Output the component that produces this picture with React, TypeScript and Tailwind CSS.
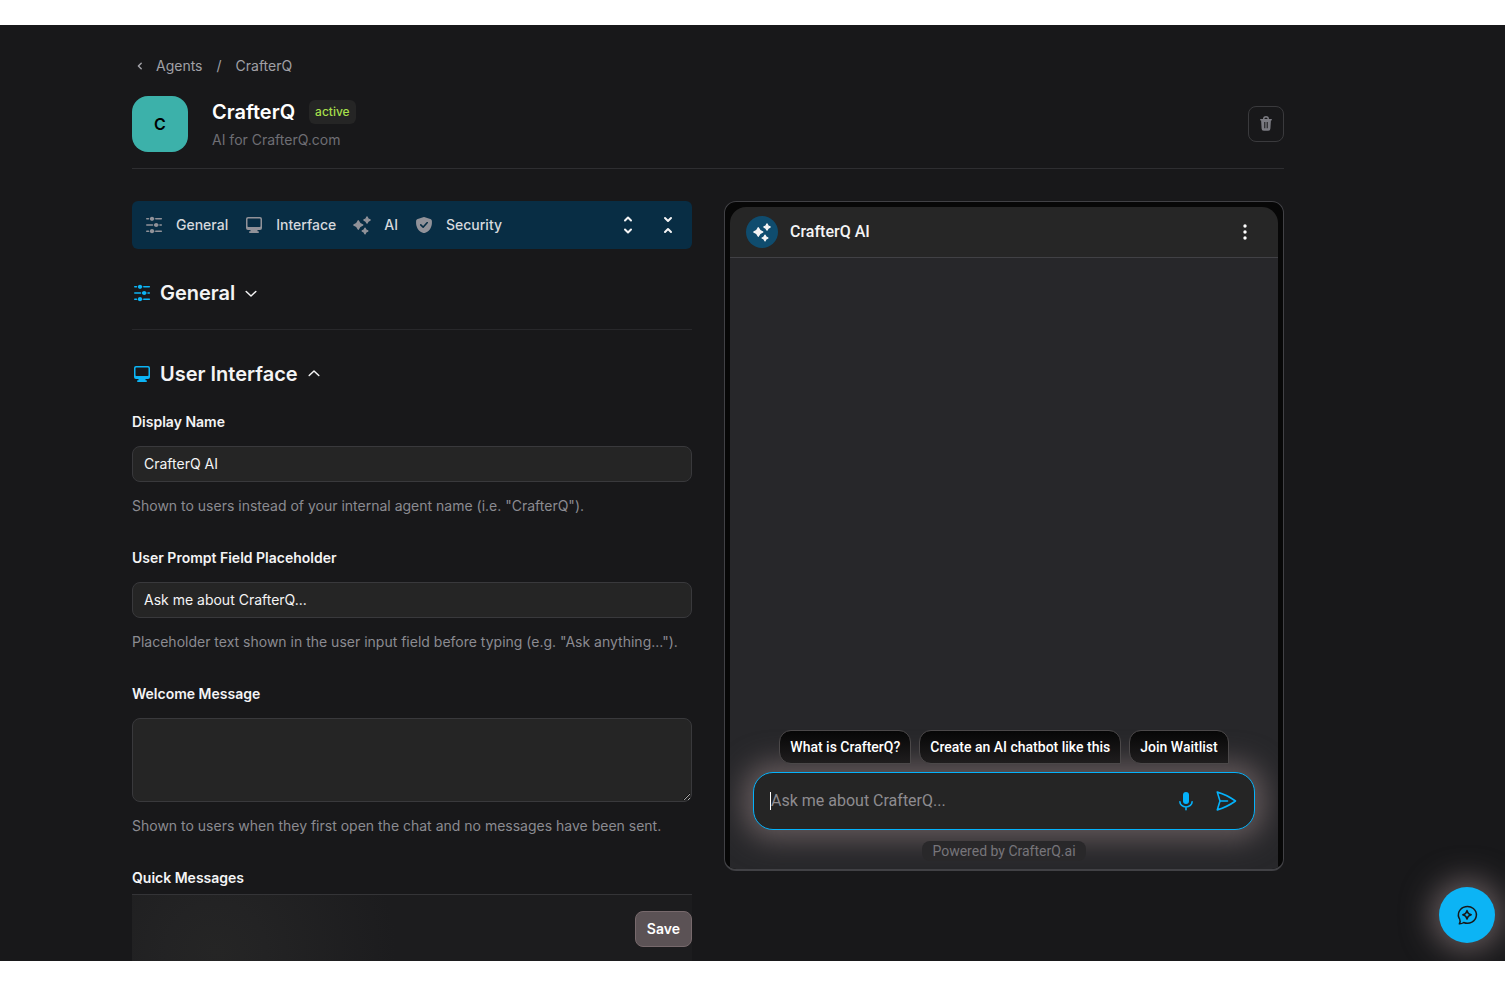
import { useState } from 'react';
import type { ReactNode } from 'react';

type IconProps = { className?: string };

function SlidersIcon({ className }: IconProps) {
    return (
        <svg viewBox="0 0 20 20" className={className} fill="currentColor" stroke="currentColor" aria-hidden="true">
            <path
                d="M2.800 3.800H4.500M11.800 3.800H17.300M2.800 10H8.500M16 10H17.300M2.800 16.200H4.500M11.800 16.200H17.300"
                fill="none"
                strokeWidth="1.600"
                strokeLinecap="round"
            />
            <path d="M6 3.800H10.200M10 10H14.400M6 16.200H10.200" fill="none" strokeWidth="1.600" />
            <circle cx="8" cy="3.800" r="2.100" stroke="none" />
            <circle cx="12.200" cy="10" r="2.100" stroke="none" />
            <circle cx="8" cy="16.200" r="2.100" stroke="none" />
        </svg>
    );
}

function MonitorIcon({ className }: IconProps) {
    return (
        <svg viewBox="0 0 20 20" className={className} fill="currentColor" aria-hidden="true">
            <path
                fillRule="evenodd"
                d="M4 2h12a2 2 0 0 1 2 2v9a2 2 0 0 1-2 2h-2.500v1.200h.6a.9.9 0 0 1 0 1.800H5.900a.9.9 0 0 1 0-1.800h.6V15H4a2 2 0 0 1-2-2V4a2 2 0 0 1 2-2Zm.3 1.500a.8.8 0 0 0-.8.8v6.900a.8.8 0 0 0 .8.8h11.400a.8.8 0 0 0 .8-.8V4.300a.8.8 0 0 0-.8-.8H4.300Z"
            />
        </svg>
    );
}

function SparklesIcon({ className }: IconProps) {
    return (
        <svg viewBox="0 0 20 20" className={className} fill="currentColor" stroke="currentColor" strokeWidth="1" strokeLinejoin="round" aria-hidden="true">
            <path d="M6.300 5.900Q7.300 9 10.600 10 7.300 11 6.300 14.100 5.300 11 2 10 5.300 9 6.300 5.900Z" strokeWidth="1.600" />
            <path d="M15 1.900Q15.600 4.400 18.100 5 15.600 5.600 15 8.100 14.400 5.600 11.900 5 14.400 4.400 15 1.900Z" strokeWidth="1.400" />
            <path d="M13 13.200Q13.500 15.500 15.800 16 13.500 16.500 13 18.800 12.500 16.500 10.200 16 12.500 15.500 13 13.200Z" strokeWidth="1.400" />
        </svg>
    );
}

function ShieldIcon({ className }: IconProps) {
    return (
        <svg viewBox="0 0 20 20" className={className} fill="currentColor" aria-hidden="true">
            <path
                fillRule="evenodd"
                d="M9.100 2.200a2.600 2.600 0 0 1 1.800 0l5.400 1.900c.9.3 1.500 1 1.600 1.900.4 5.500-1.700 9.800-6.600 11.800a3.400 3.400 0 0 1-2.600 0C3.800 15.800 1.700 11.500 2.100 6c.1-.9.7-1.600 1.600-1.900l5.400-1.900Zm4.800 5.900a.75.75 0 0 0-1.100-1L9.100 11 7.300 9.300a.75.75 0 0 0-1.100 1.100l2.400 2.300c.3.3.8.3 1.100 0l4.200-4.600Z"
            />
        </svg>
    );
}

function TrashIcon({ className }: IconProps) {
    return (
        <svg viewBox="0 0 16 16" className={className} fill="currentColor" aria-hidden="true">
            <path
                fillRule="evenodd"
                d="M5 3a3 3 0 0 1 6 0h2.200a.7.7 0 0 1 0 1.600h-.3l-.5 7.900A2.200 2.200 0 0 1 10.200 14.800H5.800a2.200 2.200 0 0 1-2.200-2.300L3.100 4.600h-.3A.7.7 0 0 1 2.800 3H5Zm1.400 0h3.200a1.600 1.600 0 0 0-3.200 0ZM6.300 6v6.300h1V6h-1Zm2.400 0v6.300h1V6h-1Z"
            />
        </svg>
    );
}

function MicIcon({ className }: IconProps) {
    return (
        <svg viewBox="0 0 24 24" className={className} fill="none" stroke="currentColor" strokeWidth="1.600" strokeLinecap="round" aria-hidden="true">
            <rect x="9" y="3" width="6" height="12" rx="3" fill="currentColor" stroke="none" />
            <path d="M5.900 12.800a6.100 5.200 0 0 0 12.200 0M12 18V20.800" />
        </svg>
    );
}

function SendIcon({ className }: IconProps) {
    return (
        <svg viewBox="0 0 24 24" className={className} fill="none" stroke="currentColor" strokeWidth="1.600" strokeLinecap="round" strokeLinejoin="round" aria-hidden="true">
            <path d="M6 12 3.270 3.130A59.770 59.770 0 0 1 21.490 12 59.770 59.770 0 0 1 3.270 20.880L6 12Zm0 0h7.500" />
        </svg>
    );
}

function ChatSparkIcon({ className }: IconProps) {
    return (
        <svg viewBox="0 0 24 24" className={className} fill="none" stroke="currentColor" strokeWidth="1.500" strokeLinecap="round" strokeLinejoin="round" aria-hidden="true">
            <path d="M4.300 20.800C6.200 20.900 7.600 20.300 8.700 19.500A9 8.400 0 1 0 4.700 16.200C5.400 17.700 5.300 19.300 4.300 20.800Z" />
            <path d="M12 7.600Q12.700 11 16.200 11.800 12.700 12.600 12 16 11.300 12.600 7.800 11.800 11.300 11 12 7.600Z" />
        </svg>
    );
}

function Chevron({ d, className }: { d: string; className?: string }) {
    return (
        <svg viewBox="0 0 20 20" className={className} fill="none" stroke="currentColor" strokeWidth="1.500" strokeLinecap="round" strokeLinejoin="round" aria-hidden="true">
            <path d={d} />
        </svg>
    );
}

const tabs = [
    { name: 'General', icon: SlidersIcon },
    { name: 'Interface', icon: MonitorIcon },
    { name: 'AI', icon: SparklesIcon },
    { name: 'Security', icon: ShieldIcon },
];

const quickMessages = ['What is CrafterQ?', 'Create an AI chatbot like this', 'Join Waitlist'];

function Field({ id, label, help, children }: { id: string; label: string; help: string; children: ReactNode }) {
    return (
        <div className="mb-8 flex flex-col">
            <label htmlFor={id} className="mb-3.5 text-sm font-semibold text-zinc-100">
                {label}
            </label>
            {children}
            <p className="mt-3.5 text-sm text-[#8b8b91]">{help}</p>
        </div>
    );
}

function ChatPreview({ title, placeholder }: { title: string; placeholder: string }) {
    return (
        <section className="flex min-h-[670px] flex-col self-start overflow-hidden rounded-xl border border-b-2 border-[#414145] bg-[#070707] px-[5px] pt-[5px] font-['Roboto',sans-serif]">
            <header className="flex h-[51px] shrink-0 items-center rounded-t-2xl border-b border-[#414145] bg-[#262626] px-4">
                <span className="flex size-8 items-center justify-center rounded-full bg-[#0f4c6e] text-zinc-100">
                    <SparklesIcon className="size-5" />
                </span>
                <h2 className="ml-3 flex-1 font-medium text-zinc-100">{title}</h2>
                <button type="button" aria-label="More options" className="flex w-8 justify-center text-white">
                    <svg viewBox="0 0 20 20" className="size-5" fill="currentColor" aria-hidden="true">
                        <circle cx="9" cy="4" r="1.700" />
                        <circle cx="9" cy="10" r="1.700" />
                        <circle cx="9" cy="16" r="1.700" />
                    </svg>
                </button>
            </header>
            <div className="flex flex-1 flex-col justify-end overflow-hidden bg-[#27272a] px-[23px] pb-2">
                <div className="relative z-10 flex justify-center gap-2">
                    {quickMessages.map((message) => (
                        <button
                            key={message}
                            type="button"
                            className="h-[34px] rounded-xl rounded-br-none border border-[#4b4849] bg-linear-to-b from-[#070707] to-[#1f1d1e] px-2.5 text-sm font-medium whitespace-nowrap text-white"
                        >
                            {message}
                        </button>
                    ))}
                </div>
                <div className="mt-2 flex h-[58px] items-center rounded-[20px] border border-[#04b2fb] bg-[#252525] px-4 shadow-[0_0_28px_10px_#62585a]">
                    <span className="h-[18px] w-px bg-white" />
                    <input
                        aria-label="Your message"
                        placeholder={placeholder}
                        className="min-w-0 flex-1 bg-transparent text-zinc-100 outline-none placeholder:text-[#8e8c90]"
                    />
                    <button type="button" aria-label="Record" className="flex size-10 items-center justify-center text-[#04b2fb]">
                        <MicIcon className="size-6" />
                    </button>
                    <button type="button" aria-label="Send" className="-mr-2 flex size-10 items-center justify-center text-[#04b2fb]">
                        <SendIcon className="size-6" />
                    </button>
                </div>
                <a href="#powered" className="relative mt-[11px] self-center rounded-lg bg-[#29282a] px-2.5 text-sm text-[#77757a]">
                    Powered by CrafterQ.ai
                </a>
            </div>
        </section>
    );
}

export default function App() {
    const [displayName, setDisplayName] = useState('CrafterQ AI');
    const [placeholder, setPlaceholder] = useState('Ask me about CrafterQ...');
    const [welcome, setWelcome] = useState('');

    const inputStyle =
        'rounded-lg border border-[#39393c] bg-[#252525] px-[11px] text-sm text-zinc-100 outline-none focus:border-sky-500';

    return (
        <div className="flex h-screen flex-col bg-white pt-[25px] pb-[26px] font-['Inter',sans-serif] text-base">
            <main className="relative min-h-0 flex-1 overflow-hidden bg-[#18181a] pt-[31px] pr-[221px] pl-[132px]">
                <nav aria-label="Breadcrumb" className="flex items-center text-sm text-[#a0a0a6]">
                    <Chevron d="M9.200 7.200 6.400 10 9.200 12.800" className="mr-1 size-5" />
                    <a href="#agents">Agents</a>
                    <span className="mx-3.5">/</span>
                    <a href="#crafterq">CrafterQ</a>
                </nav>

                <header className="mt-5 flex items-center border-b border-[#2e2e31] pb-4">
                    <span className="flex size-14 items-center justify-center rounded-2xl bg-[#3cb1aa] font-semibold text-black">C</span>
                    <div className="ml-6 flex-1">
                        <div className="flex items-center">
                            <h1 className="text-xl font-semibold text-white">CrafterQ</h1>
                            <span className="ml-3.5 flex h-6 items-center rounded-md bg-[#252525] px-1.5 text-xs font-medium text-[#a6df4b]">
                                active
                            </span>
                        </div>
                        <p className="mt-1 text-sm text-[#6e6e74]">AI for CrafterQ.com</p>
                    </div>
                    <button
                        type="button"
                        aria-label="Delete agent"
                        className="flex size-9 items-center justify-center rounded-lg border border-[#3a3a3d] text-[#7b7b82]"
                    >
                        <TrashIcon className="size-4" />
                    </button>
                </header>

                <div className="mt-8 grid grid-cols-2 gap-8">
                    <div className="flex flex-col">
                        <nav aria-label="Sections" className="flex h-12 items-center gap-4 rounded-md bg-[#082d44] pr-1 pl-3">
                            {tabs.map(({ name, icon: Icon }) => (
                                <a key={name} href={`#${name}`} className="flex items-center gap-3 text-sm font-medium text-[#d6d9dd]">
                                    <Icon className="size-5 text-[#919299]" />
                                    {name}
                                </a>
                            ))}
                            <div className="ml-auto flex text-zinc-100">
                                <button type="button" aria-label="Expand all" className="flex size-10 items-center justify-center">
                                    <Chevron d="M7 5.500 10 2.500 13 5.500M7 14.500 10 17.500 13 14.500" className="size-5 stroke-2" />
                                </button>
                                <button type="button" aria-label="Collapse all" className="flex size-10 items-center justify-center">
                                    <Chevron d="M7 3 10 6 13 3M7 17 10 14 13 17" className="size-5 stroke-2" />
                                </button>
                            </div>
                        </nav>

                        <h2 className="mt-[30px] border-b border-[#28282b] pb-[22px] text-xl font-semibold text-zinc-100">
                            <button type="button" aria-expanded="false" className="flex items-center">
                                <SlidersIcon className="mr-2 size-5 text-[#0cb4f5]" />
                                General
                                <Chevron d="M5.200 8.500 10 13 14.800 8.500" className="ml-1.5 size-5" />
                            </button>
                        </h2>

                        <h2 className="mt-[30px] mb-6 text-xl font-semibold text-zinc-100">
                            <button type="button" aria-expanded="true" className="flex items-center">
                                <MonitorIcon className="mr-2 size-5 text-[#0cb4f5]" />
                                User Interface
                                <Chevron d="M5.200 11.500 10 7 14.800 11.500" className="ml-1.5 size-5" />
                            </button>
                        </h2>

                        <Field id="display-name" label="Display Name" help={'Shown to users instead of your internal agent name (i.e. "CrafterQ").'}>
                            <input
                                id="display-name"
                                value={displayName}
                                onChange={(e) => setDisplayName(e.target.value)}
                                className={`h-9 pb-0.5 ${inputStyle}`}
                            />
                        </Field>
                        <Field
                            id="placeholder"
                            label="User Prompt Field Placeholder"
                            help={'Placeholder text shown in the user input field before typing (e.g. "Ask anything...").'}
                        >
                            <input
                                id="placeholder"
                                value={placeholder}
                                onChange={(e) => setPlaceholder(e.target.value)}
                                className={`h-9 pb-0.5 ${inputStyle}`}
                            />
                        </Field>
                        <Field id="welcome" label="Welcome Message" help="Shown to users when they first open the chat and no messages have been sent.">
                            <textarea
                                id="welcome"
                                value={welcome}
                                onChange={(e) => setWelcome(e.target.value)}
                                className={`h-[84px] resize-y py-2 ${inputStyle}`}
                            />
                        </Field>

                        <h3 className="text-sm font-semibold text-zinc-100">Quick Messages</h3>
                        <div className="mt-1.5 flex justify-end border-t border-[#343437] bg-[#1c1c1e] bg-[radial-gradient(circle_at_15%_85%,#252525_0,#232324_50px,#1c1c1e_180px)] py-4">
                            <button type="submit" className="h-9 rounded-lg border border-[#77696c] bg-[#5b5255] px-[11px] text-sm font-semibold text-white">
                                Save
                            </button>
                        </div>
                    </div>

                    <ChatPreview title={displayName} placeholder={placeholder} />
                </div>

                <button
                    type="button"
                    aria-label="Open chat"
                    className="absolute right-2.5 bottom-[18px] flex size-14 items-center justify-center rounded-full bg-[#0cb4f5] text-[#18181a] shadow-[0_0_30px_8px_#62585a]"
                >
                    <ChatSparkIcon className="size-6" />
                </button>
            </main>
        </div>
    );
}
